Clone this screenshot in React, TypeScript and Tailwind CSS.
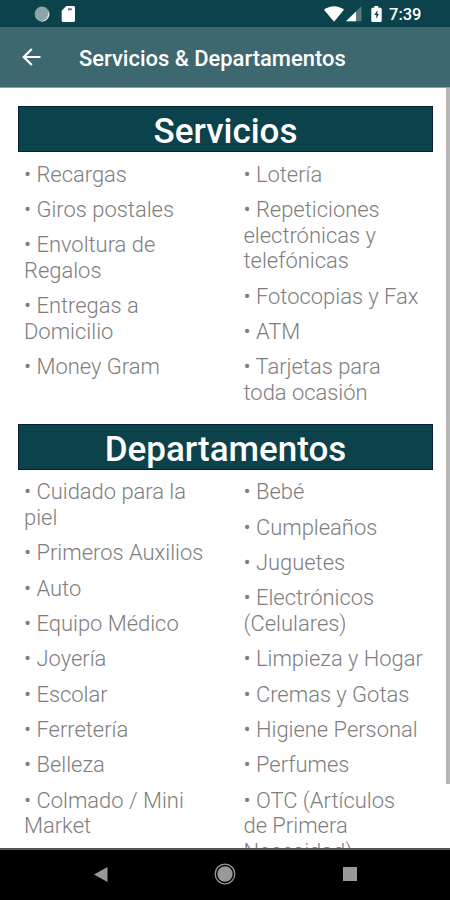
import type { ReactNode } from 'react';

const services = {
  left: ['Recargas', 'Giros postales', 'Envoltura de Regalos', 'Entregas a Domicilio', 'Money Gram'],
  right: ['Lotería', 'Repeticiones electrónicas y telefónicas', 'Fotocopias y Fax', 'ATM', 'Tarjetas para toda ocasión'],
};

const departments = {
  left: ['Cuidado para la piel', 'Primeros Auxilios', 'Auto', 'Equipo Médico', 'Joyería', 'Escolar', 'Ferretería', 'Belleza', 'Colmado / Mini Market'],
  right: ['Bebé', 'Cumpleaños', 'Juguetes', 'Electrónicos (Celulares)', 'Limpieza y Hogar', 'Cremas y Gotas', 'Higiene Personal', 'Perfumes', 'OTC (Artículos de\u00a0Primera Necesidad)'],
};

function StatusBar() {
  return (
    <div className="flex h-[27px] shrink-0 items-center bg-[#0c424b] text-white">
      <svg className="ml-[34px] h-4 w-4" viewBox="0 0 16 16">
        <circle cx="8" cy="8" r="7.4" fill="#8ba5aa" />
        <path d="M14.5 4.6a7.4 7.4 0 0 1-8.2 10.6c5 .1 8.8-4 8.2-10.6Z" fill="#e8eff0" />
      </svg>
      <svg className="ml-[11px] h-4 w-[15px]" viewBox="0 0 15 16">
        <path d="M5.3 0H12.6Q14 0 14 1.4V14.6Q14 16 12.6 16H2Q.7 16 .7 14.6V4.8Z" fill="white" />
        <path d="M7 2.4h3.8v1.8H7z" fill="#45666b" />
      </svg>
      <svg className="ml-auto h-4 w-5" viewBox="0 0 20 16">
        <path d="M0 3.8C5.8-1 14.2-1 20 3.8L10 15.8Z" fill="white" />
      </svg>
      <svg className="ml-[2px] h-4 w-4" viewBox="0 0 16 16">
        <path d="M15.5 0V15.3H0Z" fill="#59797f" />
        <path d="M10 5.5V15.3H0Z" fill="white" />
      </svg>
      <svg className="ml-[9px] h-4 w-[11px]" viewBox="0 0 11 16">
        <path d="M3.3 0h4v1.7H9.5q1.2 0 1.2 1.2v11.8q0 1.2-1.2 1.2h-8Q.3 15.9.3 14.7V2.9q0-1.2 1.2-1.2h1.8Z" fill="white" />
        <path d="M6.4 4.2 3.3 9h2v3.8L7.9 8H6.4Z" fill="#0c424b" />
      </svg>
      <span className="ml-[7px] w-[61px] pt-[3px] text-[16.5px] font-medium leading-none">7:39</span>
    </div>
  );
}

function AppBar() {
  return (
    <header className="flex h-[61px] shrink-0 items-center border-b border-[#8ba4a8] bg-[#3e686f] text-white">
      <svg className="ml-[22px] h-[18px] w-[19px]" viewBox="0 0 19 18" fill="none" stroke="white" strokeWidth="2.2">
        <path d="M18.5 9H2M9.8 1 1.7 9l8.1 8" />
      </svg>
      <h1 className="ml-[38px] whitespace-nowrap pt-[4px] text-[21.95px] font-medium leading-none">Servicios &amp; Departamentos</h1>
    </header>
  );
}

function Column({ items }: { items: string[] }) {
  return (
    <ul className="flex flex-col gap-[9.5px]">
      {items.map((item) => (
        <li key={item}>{`• ${item}`}</li>
      ))}
    </ul>
  );
}

function Section({ title, left, right }: { title: ReactNode; left: string[]; right: string[] }) {
  return (
    <section>
      <h2 className="flex h-[46px] items-center justify-center border border-[#061f39] bg-[#0c424b] pt-[5px] text-[35px] font-medium leading-none text-white">
        {title}
      </h2>
      <div className="grid grid-cols-[219.5px_184px] pl-[6px] pt-[9.5px] text-[21.93px] font-light leading-[25.8px] text-[#7e7e7e]">
        <div className="w-[182px]"><Column items={left} /></div>
        <Column items={right} />
      </div>
    </section>
  );
}

function NavigationBar() {
  return (
    <nav className="flex h-[52px] shrink-0 items-center border-t-2 border-[#555] bg-black pb-[2px]">
      <svg className="ml-[94px] h-[15px] w-[14px]" viewBox="0 0 14 15"><path d="M0 7.5 13.5 0v15Z" fill="#999" /></svg>
      <svg className="ml-[106px] h-[22px] w-[22px]" viewBox="0 0 22 22">
        <circle cx="11" cy="11" r="9.8" fill="none" stroke="#999" strokeWidth="1.3" />
        <circle cx="11" cy="11" r="7.7" fill="#999" />
      </svg>
      <div className="ml-[107px] h-[14px] w-[14px] bg-[#999]" />
    </nav>
  );
}

export default function App() {
  return (
    <div className="flex h-[900px] w-[450px] flex-col overflow-hidden bg-white font-[Roboto,sans-serif]">
      <StatusBar />
      <AppBar />
      <main className="flex min-h-0 flex-1 justify-between overflow-hidden">
        <div className="ml-[18px] mt-[18px] flex w-[415px] flex-col gap-[18px]">
          <Section title="Servicios" {...services} />
          <Section title="Departamentos" {...departments} />
        </div>
        <div className="h-[696px] w-1 bg-[#b7b7b7]" />
      </main>
      <NavigationBar />
    </div>
  );
}
